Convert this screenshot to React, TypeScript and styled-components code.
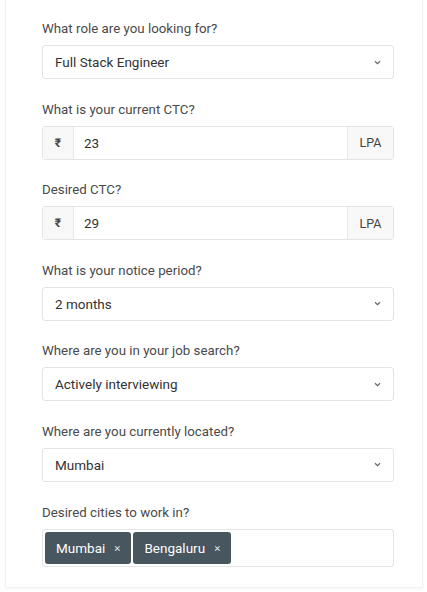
import React from "react";
import styled, { createGlobalStyle } from "styled-components";

const Global = createGlobalStyle`
  html, body { margin: 0; padding: 0; background: #ffffff; }
  body { font-family: Roboto, "Liberation Sans", Arial, sans-serif; -webkit-font-smoothing: antialiased; }
  * { box-sizing: border-box; }
`;

const Page = styled.div`
  width: 427px;
  height: 592px;
  padding: 0 4px 0 5px;
`;

const Card = styled.div`
  width: 418px;
  height: 588px;
  background: #fff;
  border: 1px solid #f1f1f1;
  border-top: none;
  box-shadow: 0 1px 3px rgba(0, 0, 0, 0.04);
  padding: 20px 28px 0 36px;
  display: flex;
  flex-direction: column;
  gap: 21.6px;
`;

const Field = styled.div`
  display: flex;
  flex-direction: column;
  gap: 8px;
`;

const Label = styled.div`
  font-size: 13.3px;
  line-height: 17px;
  color: #4a4a4a;
`;

const Box = styled.div`
  height: 34px;
  border: 1px solid #e4e4e4;
  border-radius: 3px;
  background: #fff;
  display: flex;
  align-items: stretch;
  font-size: 13.5px;
  color: #333;
`;

const SelectText = styled.div`
  flex: 1;
  display: flex;
  align-items: center;
  padding-left: 12px;
`;

const Chevron = styled.div`
  width: 30px;
  display: flex;
  align-items: center;
  justify-content: center;
  padding-right: 2px;
`;

const Addon = styled.div<{ $w: number; $side: "left" | "right" }>`
  width: ${(p) => p.$w}px;
  background: #f8f8f8;
  display: flex;
  align-items: center;
  justify-content: center;
  color: #444;
  font-size: ${(p) => (p.$side === "left" ? 12 : 12.5)}px;
  font-weight: ${(p) => (p.$side === "left" ? 700 : 400)};
  ${(p) => (p.$side === "left" ? "border-right: 1px solid #e8e8e8;" : "border-left: 1px solid #e8e8e8;")}
`;

const InputText = styled.div`
  flex: 1;
  display: flex;
  align-items: center;
  padding-left: 10px;
`;

const TagBox = styled(Box)`
  height: 38px;
  padding: 2px;
  gap: 2px;
`;

const Tag = styled.div`
  background: #47565f;
  color: #fff;
  border-radius: 3px;
  display: flex;
  align-items: center;
  padding: 0 11px 0 11px;
  font-size: 13.5px;
  gap: 9px;
`;

const X = styled.span`
  font-size: 11.5px;
  color: #dfe3e6;
`;

const ChevronIcon = () => (
  <svg width="7" height="5" viewBox="0 0 7 5">
    <path d="M1 1.2 L3.5 3.6 L6 1.2" stroke="#666" strokeWidth="1.2" fill="none" />
  </svg>
);

const SelectField = ({ label, value }: { label: string; value: string }) => (
  <Field>
    <Label>{label}</Label>
    <Box>
      <SelectText>{value}</SelectText>
      <Chevron>
        <ChevronIcon />
      </Chevron>
    </Box>
  </Field>
);

const MoneyField = ({ label, value }: { label: string; value: string }) => (
  <Field>
    <Label>{label}</Label>
    <Box>
      <Addon $w={31} $side="left">₹</Addon>
      <InputText>{value}</InputText>
      <Addon $w={46} $side="right">LPA</Addon>
    </Box>
  </Field>
);

export default function App() {
  return (
    <>
      <Global />
      <Page>
        <Card>
          <SelectField label="What role are you looking for?" value="Full Stack Engineer" />
          <MoneyField label="What is your current CTC?" value="23" />
          <MoneyField label="Desired CTC?" value="29" />
          <SelectField label="What is your notice period?" value="2 months" />
          <SelectField label="Where are you in your job search?" value="Actively interviewing" />
          <SelectField label="Where are you currently located?" value="Mumbai" />
          <Field>
            <Label>Desired cities to work in?</Label>
            <TagBox>
              <Tag>
                Mumbai<X>×</X>
              </Tag>
              <Tag>
                Bengaluru<X>×</X>
              </Tag>
            </TagBox>
          </Field>
        </Card>
      </Page>
    </>
  );
}
